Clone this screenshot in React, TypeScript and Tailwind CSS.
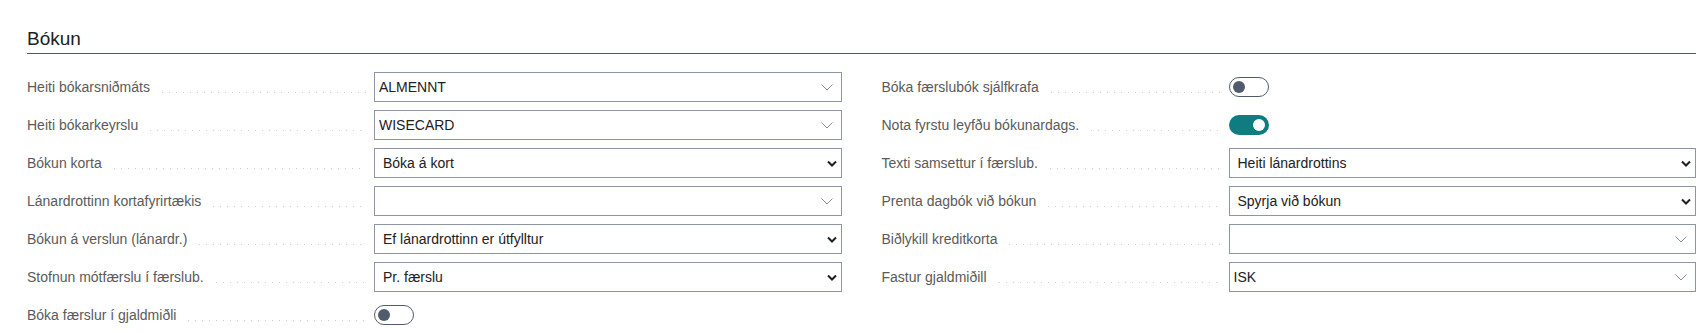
import React from "react";

type Field =
  | { label: string; kind: "lookup"; value: string }
  | { label: string; kind: "option"; value: string }
  | { label: string; kind: "toggle"; on: boolean };

const left: Field[] = [
  { label: "Heiti bókarsniðmáts", kind: "lookup", value: "ALMENNT" },
  { label: "Heiti bókarkeyrslu", kind: "lookup", value: "WISECARD" },
  { label: "Bókun korta", kind: "option", value: "Bóka á kort" },
  { label: "Lánardrottinn kortafyrirtækis", kind: "lookup", value: "" },
  { label: "Bókun á verslun (lánardr.)", kind: "option", value: "Ef lánardrottinn er útfylltur" },
  { label: "Stofnun mótfærslu í færslub.", kind: "option", value: "Pr. færslu" },
  { label: "Bóka færslur í gjaldmiðli", kind: "toggle", on: false },
];

const right: Field[] = [
  { label: "Bóka færslubók sjálfkrafa", kind: "toggle", on: false },
  { label: "Nota fyrstu leyfðu bókunardags.", kind: "toggle", on: true },
  { label: "Texti samsettur í færslub.", kind: "option", value: "Heiti lánardrottins" },
  { label: "Prenta dagbók við bókun", kind: "option", value: "Spyrja við bókun" },
  { label: "Biðlykill kreditkorta", kind: "lookup", value: "" },
  { label: "Fastur gjaldmiðill", kind: "lookup", value: "ISK" },
];

function LightChevron() {
  return (
    <svg width="12" height="7" viewBox="0 0 12 7" fill="none" className="shrink-0">
      <polyline points="0.5,0.5 6,6 11.5,0.5" stroke="#8c8c8c" strokeWidth="1" />
    </svg>
  );
}

function BoldChevron() {
  return (
    <svg width="10" height="7" viewBox="0 0 10 7" fill="none" className="shrink-0">
      <polyline points="1,1.5 5,5.5 9,1.5" stroke="#1f1f1f" strokeWidth="2" />
    </svg>
  );
}

function Toggle({ on }: { on: boolean }) {
  if (on) {
    return (
      <div className="flex h-[20px] w-[40px] items-center justify-end rounded-full bg-[#0f7c82] pr-[4px]">
        <div className="h-[12px] w-[12px] rounded-full bg-white" />
      </div>
    );
  }
  return (
    <div className="flex h-[20px] w-[40px] items-center rounded-full border border-[#505c6d] bg-white pl-[3px]">
      <div className="h-[12px] w-[12px] rounded-full bg-[#505c6d]" />
    </div>
  );
}

function Control({ f }: { f: Field }) {
  if (f.kind === "toggle") {
    return (
      <div className="flex h-[30px] flex-1 items-center">
        <Toggle on={f.on} />
      </div>
    );
  }
  const lookup = f.kind === "lookup";
  return (
    <div
      className={`flex h-[30px] flex-1 items-center border border-[#8f96a3] bg-white ${
        lookup ? "pl-[4px] pr-[8px]" : "pl-[8px] pr-[4px]"
      }`}
    >
      <span className="flex-1 truncate text-[#212121]">{f.value}</span>
      {lookup ? <LightChevron /> : <BoldChevron />}
    </div>
  );
}

function Row({ f }: { f: Field }) {
  return (
    <div className="flex h-[30px] items-stretch">
      <div className="flex w-[347px] shrink-0 items-stretch pr-[8px]">
        <span className="flex items-center whitespace-nowrap pr-[12px] text-[#5a5a5a]">{f.label}</span>
        <span className="flex-1 bg-[linear-gradient(to_right,#cccccc_1px,transparent_1px)] bg-[length:7px_1px] bg-[position:0_20px] bg-repeat-x" />
      </div>
      <Control f={f} />
    </div>
  );
}

export default function App() {
  return (
    <div className="min-h-[332px] w-[1700px] bg-white pl-[27px] pr-[4px] font-['Segoe_UI','Liberation_Sans',sans-serif] text-[14px]">
      <div className="border-b border-[#505c6d] pt-[27px] pb-[2px]">
        <h2 className="text-[19px] leading-[24px] text-[#212121]">Bókun</h2>
      </div>
      <div className="grid grid-cols-2 gap-x-[40px] pt-[18px]">
        <div className="flex flex-col gap-[8px]">
          {left.map((f) => (
            <Row key={f.label} f={f} />
          ))}
        </div>
        <div className="flex flex-col gap-[8px]">
          {right.map((f) => (
            <Row key={f.label} f={f} />
          ))}
        </div>
      </div>
    </div>
  );
}
